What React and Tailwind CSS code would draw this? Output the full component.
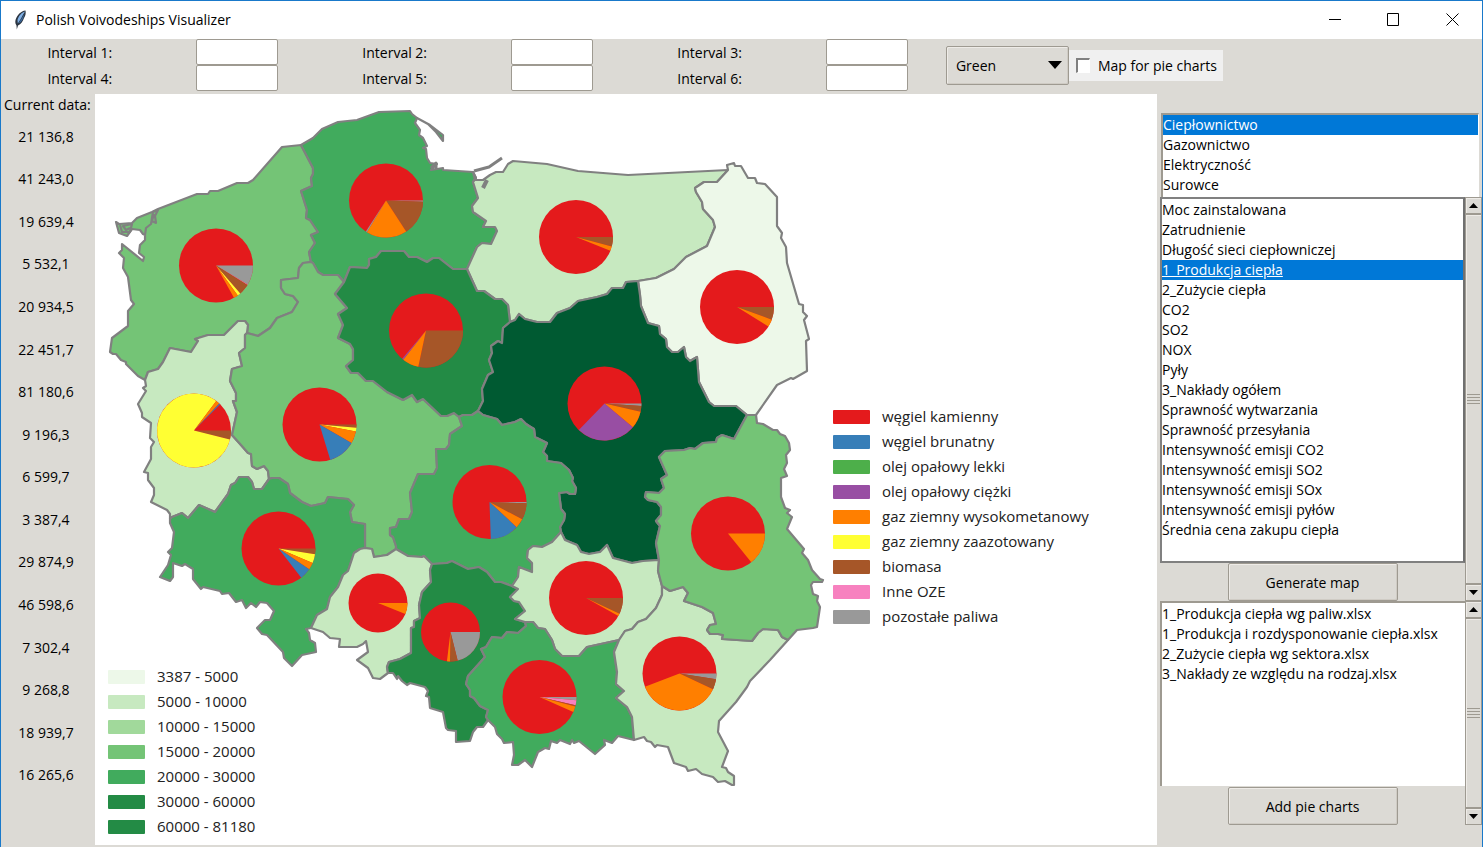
import React, { useState } from "react";

const FUELS = [
  ["węgiel kamienny", "#e41a1c"],
  ["węgiel brunatny", "#377eb8"],
  ["olej opałowy lekki", "#4daf4a"],
  ["olej opałowy ciężki", "#984ea3"],
  ["gaz ziemny wysokometanowy", "#ff7f00"],
  ["gaz ziemny zaazotowany", "#ffff33"],
  ["biomasa", "#a65628"],
  ["Inne OZE", "#f781bf"],
  ["pozostałe paliwa", "#999999"],
];
const [RED, BLUE, , PURPLE, ORANGE, YELLOW, BROWN, PINK, GRAY] = FUELS.map((f) => f[1]);

const RANGES = [
  ["3387 - 5000", "#edf8e9"],
  ["5000 - 10000", "#c7e9c0"],
  ["10000 - 15000", "#a1d99b"],
  ["15000 - 20000", "#74c476"],
  ["20000 - 30000", "#41ab5d"],
  ["30000 - 60000", "#238b45"],
  ["60000 - 81180", "#238b45"],
];

const VALUES = [
  "21 136,8", "41 243,0", "19 639,4", "5 532,1", "20 934,5", "22 451,7", "81 180,6", "9 196,3",
  "6 599,7", "3 387,4", "29 874,9", "46 598,6", "7 302,4", "9 268,8", "18 939,7", "16 265,6",
];

const SECTORS = ["Ciepłownictwo", "Gazownictwo", "Elektryczność", "Surowce"];
const DATASETS = [
  "Moc zainstalowana", "Zatrudnienie", "Długość sieci ciepłowniczej", "1_Produkcja ciepła",
  "2_Zużycie ciepła", "CO2", "SO2", "NOX", "Pyły", "3_Nakłady ogółem", "Sprawność wytwarzania",
  "Sprawność przesyłania", "Intensywność emisji CO2", "Intensywność emisji SO2",
  "Intensywność emisji SOx", "Intensywność emisji pyłów", "Średnia cena zakupu ciepła",
];
const FILES = [
  "1_Produkcja ciepła wg paliw.xlsx", "1_Produkcja i rozdysponowanie ciepła.xlsx",
  "2_Zużycie ciepła wg sektora.xlsx", "3_Nakłady ze względu na rodzaj.xlsx",
];

// Border segments; neighbouring voivodeships share the same segment.
const ARCS = {
  zpCoast: "145,380 138,376 126,364 126,362 121,360 116,354 113,354 110,352 112,338 128,326 128,311 134,304 131,300 128,277 123,268 124,258 119,253 122,250 122,244 143,261 144,257 139,253 140,245 145,240 145,235 143,234 140,230 132,229 127,236 119,233 116,222 119,224 132,223 137,218 152,212 158,209 197,194 208,194 210,191 218,191 237,183 248,183 253,180 282,147 301,145",
  zpPom: "301,145 313,168 313,174 311,178 312,186 301,191 307,210 306,218 310,220 318,232 311,235 315,243 309,252 311,262",
  pomWlkp: "311,262 313,263 318,272 323,275 338,275 344,282",
  zpWlkp: "311,262 303,263 299,268 298,278 281,280 281,288 285,294 293,296 298,302 292,312 277,318 270,328 258,336 247,333",
  zpLub: "247,333 248,325 245,321 238,321 224,335 208,335 195,339 198,341 191,352 170,348 163,362 158,369 148,372 145,380",
  lubWest: "145,380 146,386 143,388 146,391 138,404 142,413 142,417 151,423 150,438 154,442 151,447 151,459 144,472 148,473 148,480 154,488 154,495 151,502 167,510 170,514 170,519",
  lubDol: "170,519 172,517 182,513 188,518 199,505 215,512 228,494 231,485 235,483 239,477 248,477 252,482 254,489 262,489 269,479",
  lubWlkp: "247,333 245,335 245,348 239,353 242,366 232,369 230,381 236,393 236,401 233,401 237,412 232,435 241,445 248,453 251,454 252,466 257,469 264,466 268,471 269,479",
  wlkpDol: "269,479 272,478 279,478 288,484 290,493 302,502 311,506 325,503 328,497 348,499 354,505 350,512 352,522 365,524 365,548",
  dolSouth: "170,519 170,523 174,532 172,548 168,552 171,555 168,565 160,577 170,581 173,577 173,563 182,566 185,564 193,569 193,579 201,589 203,587 220,591 222,594 229,593 236,602 242,600 246,608 251,603 256,607 260,602 267,603 274,611 270,620 265,620 257,628 262,634 267,635 283,652 284,658 292,666 302,655 316,652 315,643 310,640 309,633 306,629 311,628",
  dolOpo: "365,548 360,549 354,553 348,571 343,575 338,587 330,597 327,609 317,615 311,628",
  wlkpOpo: "365,548 372,549 374,557 387,555 396,549",
  wlkpLod: "396,549 396,546 393,537 390,535 390,528 396,527 399,519 409,519 412,512 410,493 418,474 434,474 437,468 436,449 446,449 449,445 450,434 462,426 459,417",
  wlkpKuj: "344,282 335,294 347,308 338,314 343,325 338,338 350,344 353,349 353,360 346,366 351,373 358,373 366,381 373,381 387,392 403,400 412,395 417,402 423,399 441,416 447,416 454,413 459,417",
  kujLod: "459,417 463,415 472,415 478,411",
  kujMaz: "478,411 483,401 482,389 488,375 493,372 489,360 492,353 491,346 498,341 502,343 503,328 510,322",
  kujWm: "510,322 508,305 502,299 495,299 484,291 477,291 467,269",
  pomKuj: "344,282 350,267 367,268 369,265 369,259 376,257 381,251 404,251 409,257 417,257 427,262 433,258 439,258 453,269 467,269",
  pomWm: "467,269 477,247 482,243 491,244 497,231 495,227 483,227 486,221 473,212 472,206 478,198 473,182 476,178 473,172",
  pomCoast: "301,145 313,138 322,129 338,122 357,120 379,112 410,111 412,114 417,118 415,123 420,130 419,135 423,138 427,146 423,148 426,149 427,158 430,163 437,164 431,170 443,168 443,170 473,172",
  wmCoast: "473,172 475,180 483,180 490,175 496,172 503,172 508,164 513,161 547,164 578,171 628,175 728,170",
  wmPod: "728,170 717,182 704,182 695,188 696,192 702,202 703,209 713,220 715,227 707,246 686,257 674,269 656,278 638,281",
  wmMaz: "510,322 515,320 519,314 525,319 537,322 550,322 557,313 570,308 578,301 597,297 607,294 612,288 623,288 626,282 638,281",
  podEast: "728,170 727,165 734,163 735,166 741,166 748,178 755,178 757,183 765,184 777,197 777,226 782,233 781,238 786,247 787,263 799,304 803,305 803,312 807,316 804,320 809,339 806,341 807,371 793,379 791,378 777,385 756,415",
  podMaz: "638,281 640,295 641,306 648,323 659,326 660,334 666,339 667,347 672,352 678,352 684,347 686,357 690,361 697,357 699,382 709,402 714,406 736,406 747,415",
  podLbl: "747,415 756,415",
  mazLbl: "747,415 734,439 722,435 717,438 716,442 703,443 695,449 690,448 684,450 665,451 659,457 667,475 661,479 664,488 659,493 646,492 645,497 648,500 657,502 661,507 661,515 656,521 660,526 656,543 659,560",
  lblEast: "756,415 757,423 763,424 773,430 777,430 780,434 785,436 789,443 790,450 786,455 787,463 784,469 787,476 781,478 781,497 785,508 790,510 787,513 792,517 787,529 804,549 802,553 808,560 812,570 820,579 823,580 822,582 813,582 811,585 813,594 818,596 817,601 820,607 817,627 813,628 797,630 788,640",
  lblPkr: "788,640 782,637 778,630 763,629 758,633 752,641 722,639 723,635 718,634 710,634 707,630 710,625 716,624 713,613 702,607 684,601 688,593 683,587 670,591 662,586",
  lblSw: "659,560 658,571 662,586",
  mazSw: "659,560 643,561 632,563 613,558 607,545 600,552 589,554 581,552 577,545 565,540 561,532",
  mazLod: "478,411 483,415 497,419 502,425 515,422 521,419 526,424 529,426 534,429 535,437 547,443 543,452 547,456 547,461 561,463 569,470 573,478 572,481 576,488 575,494 570,494 567,492 559,493 561,509 565,514 564,520 560,527 561,532",
  lodSw: "561,532 552,542 542,547 533,546 528,550 527,558 532,563 532,572 519,567 518,577 512,586",
  lodOpo: "396,549 408,556 422,557 424,556 432,564",
  lodSla: "432,564 447,563 452,561 468,569 479,567 487,572 495,582 501,582 512,586",
  slaSw: "512,586 518,589 510,597 514,601 519,602 525,611 515,619 525,622",
  opoSla: "432,564 430,570 431,582 422,592 419,605 420,618 414,621 414,627 411,628 411,653 400,659 389,662 387,667 388,673",
  opoSouth: "311,628 323,632 330,638 340,639 339,647 357,647 363,644 366,641 368,652 357,660 368,668 373,678 380,679 388,673",
  slaSouth: "388,673 393,673 397,679 398,676 402,681 407,685 410,683 425,687 428,691 426,696 429,697 430,708 443,712 446,728 448,730 456,731 456,742 470,741 473,732 477,727 483,727 488,720",
  slaMal: "525,622 526,626 518,633 507,632 502,638 492,637 486,647 481,649 485,657 468,676 466,684 470,690 470,696 474,698 480,706 488,710 486,717 488,720",
  swMal: "525,622 533,622 538,628 545,629 552,640 555,649 562,656 579,656 587,647 619,640",
  swPkr: "662,586 662,595 656,608 646,619 638,622 632,629 625,631 619,640",
  malPkr: "619,640 614,652 617,672 616,684 624,691 616,698 627,707 632,717 634,740",
  malSouth: "488,720 495,727 497,734 502,739 504,743 513,742 514,755 512,765 518,765 525,760 532,767 538,752 545,748 549,749 551,741 557,743 560,740 570,744 572,740 574,743 579,741 595,754 605,745 604,740 612,743 618,736 634,740",
  pkrSouth: "634,740 644,737 647,741 651,742 655,747 657,745 668,747 674,763 686,767 688,771 696,769 702,774 713,777 718,782 725,781 732,785 734,785 734,776 728,772 726,768 722,767 728,751 718,732 719,721 736,702 747,687 750,681 770,660 788,640",
};

// A leading minus walks the segment backwards.
const REGIONS = [
  ["Zachodniopomorskie", "#74c476", "zpCoast zpPom zpWlkp zpLub"],
  ["Pomorskie", "#41ab5d", "pomCoast -pomWm -pomKuj -pomWlkp -zpPom"],
  ["Warmińsko-mazurskie", "#c7e9c0", "wmCoast wmPod -wmMaz kujWm pomWm"],
  ["Podlaskie", "#edf8e9", "podEast -podLbl -podMaz -wmPod"],
  ["Lubuskie", "#c7e9c0", "lubWest lubDol -lubWlkp zpLub"],
  ["Wielkopolskie", "#74c476", "pomWlkp wlkpKuj -wlkpLod -wlkpOpo -wlkpDol -lubWlkp -zpWlkp"],
  ["Kujawsko-pomorskie", "#238b45", "pomKuj -kujWm -kujMaz -kujLod -wlkpKuj"],
  ["Mazowieckie", "#005a32", "wmMaz podMaz mazLbl mazSw -mazLod kujMaz"],
  ["Łódzkie", "#41ab5d", "kujLod mazLod lodSw -lodSla -lodOpo wlkpLod"],
  ["Dolnośląskie", "#41ab5d", "dolSouth -dolOpo -wlkpDol -lubDol"],
  ["Opolskie", "#c7e9c0", "wlkpOpo lodOpo opoSla -opoSouth -dolOpo"],
  ["Śląskie", "#238b45", "lodSla slaSw slaMal -slaSouth -opoSla"],
  ["Świętokrzyskie", "#c7e9c0", "lblSw swPkr -swMal -slaSw -lodSw -mazSw"],
  ["Małopolskie", "#41ab5d", "swMal malPkr -malSouth -slaMal"],
  ["Podkarpackie", "#c7e9c0", "-lblPkr -pkrSouth -malPkr -swPkr"],
  ["Lubelskie", "#74c476", "podLbl lblEast lblPkr -lblSw -mazLbl"],
];

const regionPath = (arcs) =>
  "M" +
  arcs
    .split(" ")
    .flatMap((name) =>
      name[0] === "-" ? ARCS[name.slice(1)].split(" ").reverse() : ARCS[name].split(" ")
    )
    .join(" L") +
  "Z";

// Centre, radius, then [end angle, colour] clockwise from east; the rest is hard coal.
const PIES = [
  [216, 265.5, 37, [[31, GRAY], [32, PINK], [49, BROWN], [54, YELLOW], [61, ORANGE]]],
  [386, 200.5, 37, [[2, GRAY], [57, BROWN], [121, ORANGE], [123, GRAY]]],
  [426, 330.5, 37, [[102, BROWN], [128, ORANGE], [130, PURPLE]]],
  [576, 237, 37, [[15, BROWN], [22, ORANGE]]],
  [737, 307, 37, [[20, BROWN], [32, ORANGE]]],
  [194, 430.5, 37, [[14, BROWN], [307, YELLOW], [313, ORANGE], [315, BLUE]]],
  [319.5, 424.5, 37, [[5, BROWN], [11, YELLOW], [30, ORANGE], [73, BLUE]]],
  [489.5, 502, 37, [[2, GRAY], [28, BROWN], [43, ORANGE], [88, BLUE]]],
  [604.5, 403.5, 37, [[4, GRAY], [13, BROWN], [40, ORANGE], [134, PURPLE]]],
  [728, 533.5, 37, [[51, ORANGE]]],
  [278.5, 548.5, 37, [[9, BROWN], [23, YELLOW], [34, ORANGE], [52, BLUE]]],
  [378, 603, 29.5, [[22, ORANGE]]],
  [450.5, 632, 29.5, [[76, GRAY], [91, BROWN], [97, ORANGE]]],
  [539.5, 697, 37, [[5, GRAY], [13, PINK], [15, BROWN], [24, ORANGE]]],
  [679.5, 673.5, 37, [[9, GRAY], [25, BROWN], [159, ORANGE]]],
  [586, 598, 37, [[25, BROWN], [29, ORANGE]]],
];

function Pie({ cx, cy, r, slices }) {
  const at = (deg) => {
    const a = (deg * Math.PI) / 180;
    return `${(cx + r * Math.cos(a)).toFixed(2)},${(cy + r * Math.sin(a)).toFixed(2)}`;
  };
  return (
    <g>
      <circle cx={cx} cy={cy} r={r} fill={RED} />
      {slices.map(([end, color], i) => {
        const start = i ? slices[i - 1][0] : 0;
        return (
          <path
            key={i}
            fill={color}
            d={`M${cx},${cy} L${at(start)} A${r},${r} 0 ${end - start > 180 ? 1 : 0} 1 ${at(end)}Z`}
          />
        );
      })}
    </g>
  );
}

function PolandMap() {
  return (
    <svg viewBox="95 94 1062 751" className="block w-full" role="img" aria-label="Poland by voivodeship">
      <g stroke="#808080" strokeWidth="2.2" strokeLinejoin="round">
        {REGIONS.map(([name, fill, arcs]) => (
          <path key={name} d={regionPath(arcs)} fill={fill} />
        ))}
        <g fill="none">
          <path d="M120,225 L122,232 L130,232 L132,224 L123,226 L126,230 L130,228 M145,235 L146,228 L151,224 L153,212 L158,210 L155,216 L156,223 L152,221 L154,214" />
          <path d="M474,171 L489,167 L502,158" strokeWidth="3" />
          <path d="M487,180 L483,188" strokeWidth="4" />
          <path d="M431,168 L436,163 L436,169" strokeWidth="3" />
        </g>
        <path d="M417,118 L430,125 L443,135 L443,141 L436,132 L428,124Z" fill="#41ab5d" />
      </g>
      {PIES.map(([cx, cy, r, slices]) => (
        <Pie key={`${cx}-${cy}`} cx={cx} cy={cy} r={r} slices={slices} />
      ))}
    </svg>
  );
}

function Legend({ items, className }) {
  return (
    <ul className={`absolute text-[15px] text-[#222] ${className}`}>
      {items.map(([label, color]) => (
        <li key={label} className="flex h-[25px] items-center gap-3">
          <span className="h-[14px] w-[37px] rounded-[1px]" style={{ backgroundColor: color }} />
          {label}
        </li>
      ))}
    </ul>
  );
}

function ListBox({ label, items, selected, onSelect, underline, className }) {
  return (
    <ul role="listbox" aria-label={label} className={`bg-white ${className}`}>
      {items.map((item) => {
        const on = item === selected;
        return (
          <li
            key={item}
            role="option"
            aria-selected={on}
            onClick={() => onSelect(item)}
            className={`h-5 cursor-default leading-5 whitespace-nowrap ${on ? "bg-[#0078d7] text-white" : ""} ${on && underline ? "underline" : ""}`}
          >
            {item}
          </li>
        );
      })}
    </ul>
  );
}

function ScrollBar({ label }) {
  const arrow =
    "flex h-[17px] w-full items-center justify-center border border-[#9e9a91] bg-[#dcdad5] shadow-[inset_1px_1px_0_#eeebe7]";
  return (
    <div className="flex w-[17px] flex-col bg-[#bab5ab]">
      <button type="button" aria-label={`${label} up`} className={arrow}>
        <svg width="9" height="5" viewBox="0 0 9 5"><path d="M0,5 L4.5,0 L9,5Z" /></svg>
      </button>
      <div className="flex w-full flex-1 flex-col items-center justify-center gap-[2px] border border-[#9e9a91] bg-[#dcdad5] shadow-[inset_1px_1px_0_#eeebe7]">
        {[0, 1, 2, 3].map((n) => (
          <span key={n} className="h-px w-[13px] bg-[#9e9a91]" />
        ))}
      </div>
      <button type="button" aria-label={`${label} down`} className={arrow}>
        <svg width="9" height="5" viewBox="0 0 9 5"><path d="M0,0 L4.5,5 L9,0Z" /></svg>
      </button>
    </div>
  );
}

function PushButton({ children }) {
  return (
    <button
      type="button"
      className="mx-auto block h-[38px] w-[170px] rounded-[2px] border border-[#9e9a91] bg-[#dcdad5] shadow-[inset_1px_1px_0_#eeebe7,inset_-1px_-1px_0_#cfcbc4]"
    >
      {children}
    </button>
  );
}

function TitleBar() {
  return (
    <header className="flex h-[38px] items-center bg-white pb-px">
      <svg width="14" height="20" viewBox="0 0 14 20" className="ml-3" aria-hidden="true">
        <path d="M12.5,0.5 C8,1 4,5 2.5,10 C2,12.500 2.500,14 3.500,15.500 L3.800,19.500 L5,15.500 C8,14.500 10,11 11,8 C12.500,6 13,3 12.500,0.500Z" fill="#2b3440" />
        <path d="M12,1.500 C8.500,2.500 5.500,6 4.500,10 L4.800,13.500 C7.500,10 9,6 12,1.500Z" fill="#7fb0e6" />
        <path d="M11.500,4 C10,6 8,10 5.500,13.500 C8,12.500 9.500,9.500 10.300,7.500Z" fill="#3b6ea8" />
      </svg>
      <h1 className="ml-[9px] flex-1">Polish Voivodeships Visualizer</h1>
      <button type="button" aria-label="Minimize" className="flex h-full w-[58px] items-center justify-center">
        <svg width="13" height="13" viewBox="0 0 13 13"><path d="M0,6.500 H12" stroke="#000" /></svg>
      </button>
      <button type="button" aria-label="Maximize" className="flex h-full w-[58px] items-center justify-center">
        <svg width="13" height="13" viewBox="0 0 13 13"><path d="M0.500,0.500 H11.500 V12.500 H0.500Z" fill="none" stroke="#000" /></svg>
      </button>
      <button type="button" aria-label="Close" className="flex h-full w-[60px] items-center justify-center">
        <svg width="13" height="13" viewBox="0 0 13 13"><path d="M0.500,0.500 L12.500,12.500 M12.500,0.500 L0.500,12.500" stroke="#000" /></svg>
      </button>
    </header>
  );
}

function Toolbar() {
  return (
    <div className="grid h-[55px] grid-cols-[638fr_362fr] items-start">
      <div className="grid grid-cols-6 items-center justify-items-center">
        {[1, 2, 3, 4, 5, 6].map((n) => (
          <React.Fragment key={n}>
            <label htmlFor={`interval-${n}`}>Interval {n}:</label>
            <input
              id={`interval-${n}`}
              type="text"
              className="h-[26px] w-[82px] rounded-[2px] border border-[#9e9a91] bg-white px-1"
            />
          </React.Fragment>
        ))}
      </div>
      <div className="flex h-[52px] items-center">
        <div className="relative">
          <select
            aria-label="Map colour"
            defaultValue="Green"
            className="block h-[39px] w-[123px] appearance-none rounded-[2px] border border-[#9e9a91] bg-[#dcdad5] pl-[9px] shadow-[inset_1px_1px_0_#eeebe7,inset_-1px_-1px_0_#cfcbc4]"
          >
            <option>Green</option>
            <option>Blue</option>
            <option>Red</option>
          </select>
          <svg width="14" height="8" viewBox="0 0 14 8" className="pointer-events-none absolute top-[15px] right-[7px]">
            <path d="M0,0 H14 L7,8Z" />
          </svg>
        </div>
        <label className="flex h-[31px] items-center gap-2 bg-[#f0f0f0] pr-[6px] pl-[7px]">
          <input
            type="checkbox"
            className="h-[15px] w-[14px] appearance-none border-t-2 border-l-2 border-[#808080] border-r border-b border-r-white border-b-white bg-white checked:bg-[#0078d7]"
          />
          Map for pie charts
        </label>
      </div>
    </div>
  );
}

export default function App() {
  const [sector, setSector] = useState("Ciepłownictwo");
  const [dataset, setDataset] = useState("1_Produkcja ciepła");
  const [file, setFile] = useState(null);

  return (
    <div className="flex min-h-screen flex-col border-x border-t border-[#1979ca] bg-[#dcdad5] font-['Open_Sans','Noto_Sans',sans-serif] text-[14px] text-black">
      <TitleBar />
      <Toolbar />
      <main className="flex flex-1">
        <aside className="flex w-[94px] flex-col pb-[51px]">
          <h2 className="pl-[3px] leading-[21px] whitespace-nowrap">Current data:</h2>
          <ul className="flex flex-1 flex-col pr-1 text-center">
            {VALUES.map((v) => (
              <li key={v} className="flex flex-1 items-center justify-center">{v}</li>
            ))}
          </ul>
        </aside>
        <section className="relative mb-[2px] min-w-0 flex-1 bg-white">
          <PolandMap />
          <Legend items={RANGES} className="bottom-[6px] left-[13px]" />
          <Legend items={FUELS} className="top-[310px] left-[738px]" />
        </section>
        <aside className="w-[325px] pt-[19px] pl-[3px]">
          <ListBox
            label="Sector"
            items={SECTORS}
            selected={sector}
            onSelect={setSector}
            className="mr-[3px] ml-px h-[84px] border-t-2 border-l-2 border-[#9e9a91] border-r border-r-white"
          />
          <div className="flex">
            <div className="min-w-0 flex-1">
              <ListBox
                label="Data set"
                items={DATASETS}
                selected={dataset}
                onSelect={setDataset}
                underline
                className="h-[366px] border-2 border-[#808080] border-r-[#707070] pt-px"
              />
              <PushButton>Generate map</PushButton>
            </div>
            <ScrollBar label="Data sets" />
          </div>
          <div className="flex">
            <div className="min-w-0 flex-1">
              <ListBox
                label="Pie chart file"
                items={FILES}
                selected={file}
                onSelect={setFile}
                className="mb-px h-[185px] border-t-2 border-l-2 border-[#9e9a91] pt-px"
              />
              <PushButton>Add pie charts</PushButton>
            </div>
            <ScrollBar label="Files" />
          </div>
        </aside>
      </main>
    </div>
  );
}
